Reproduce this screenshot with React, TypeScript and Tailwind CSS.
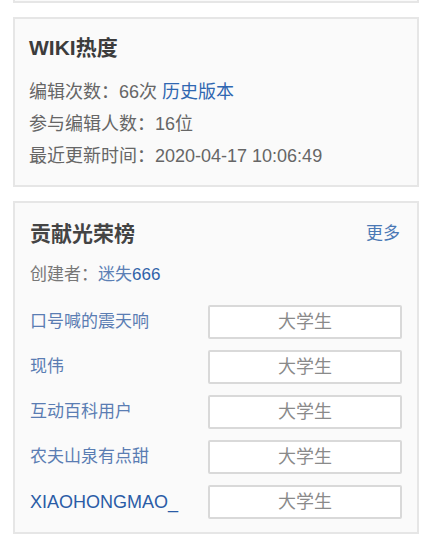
import React from "react"

const font = "font-['Liberation_Sans','Noto_Sans_CJK_SC',sans-serif]"

const contributors = [
  { name: "口号喊的震天响", latin: false },
  { name: "现伟", latin: false },
  { name: "互动百科用户", latin: false },
  { name: "农夫山泉有点甜", latin: false },
  { name: "XIAOHONGMAO_", latin: true },
]

function Heat() {
  return (
    <div className="mx-[13px] mt-[14px] border-2 border-[#e6e6e6] bg-[#fafafa] px-[14px] pt-[16px] pb-[13px]">
      <div className="h-[26px] text-[21px] leading-[26px] font-bold text-[#3c3c3c]">WIKI热度</div>
      <div className="mt-[15px] text-[18px] leading-[32px] text-[#666]">
        <div>
          编辑次数：66次 <span className="text-[#2f67b1]">历史版本</span>
        </div>
        <div>参与编辑人数：16位</div>
        <div>最近更新时间：2020-04-17 10:06:49</div>
      </div>
    </div>
  )
}

function Honor() {
  return (
    <div className="mx-[13px] mt-[14px] border-2 border-[#e6e6e6] bg-[#fafafa] px-[15px] pt-[18px] pb-[13px]">
      <div className="flex h-[26px] items-center justify-between">
        <span className="text-[21px] font-semibold text-[#444]">贡献光荣榜</span>
        <span className="mr-[2px] text-[17px] text-[#4a78b5]">更多</span>
      </div>
      <div className="mt-[12px] text-[17px] leading-[32px] text-[#777]">
        创建者：<span className="text-[#5b7fb5]">迷失</span>
        <span className="text-[#2f62a8]">666</span>
      </div>
      <div className="mt-[14px] flex flex-col gap-[11px]">
        {contributors.map((c) => (
          <div key={c.name} className="flex items-center justify-between">
            <span className={c.latin ? "text-[18px] text-[#2a5ca6]" : "text-[17px] text-[#5a7db3]"}>{c.name}</span>
            <div className="flex h-[34px] w-[194px] items-center justify-center rounded-[2px] border-2 border-[#d9d9d9] bg-white text-[18px] text-[#8a8a8a]">
              大学生
            </div>
          </div>
        ))}
      </div>
    </div>
  )
}

export default function App() {
  return (
    <div className={`min-h-[540px] w-[432px] bg-white ${font}`}>
      <div className="mx-[13px] h-[3px] border-x-2 border-b-2 border-[#e6e6e6] bg-[#fafafa]" />
      <Heat />
      <Honor />
    </div>
  )
}
